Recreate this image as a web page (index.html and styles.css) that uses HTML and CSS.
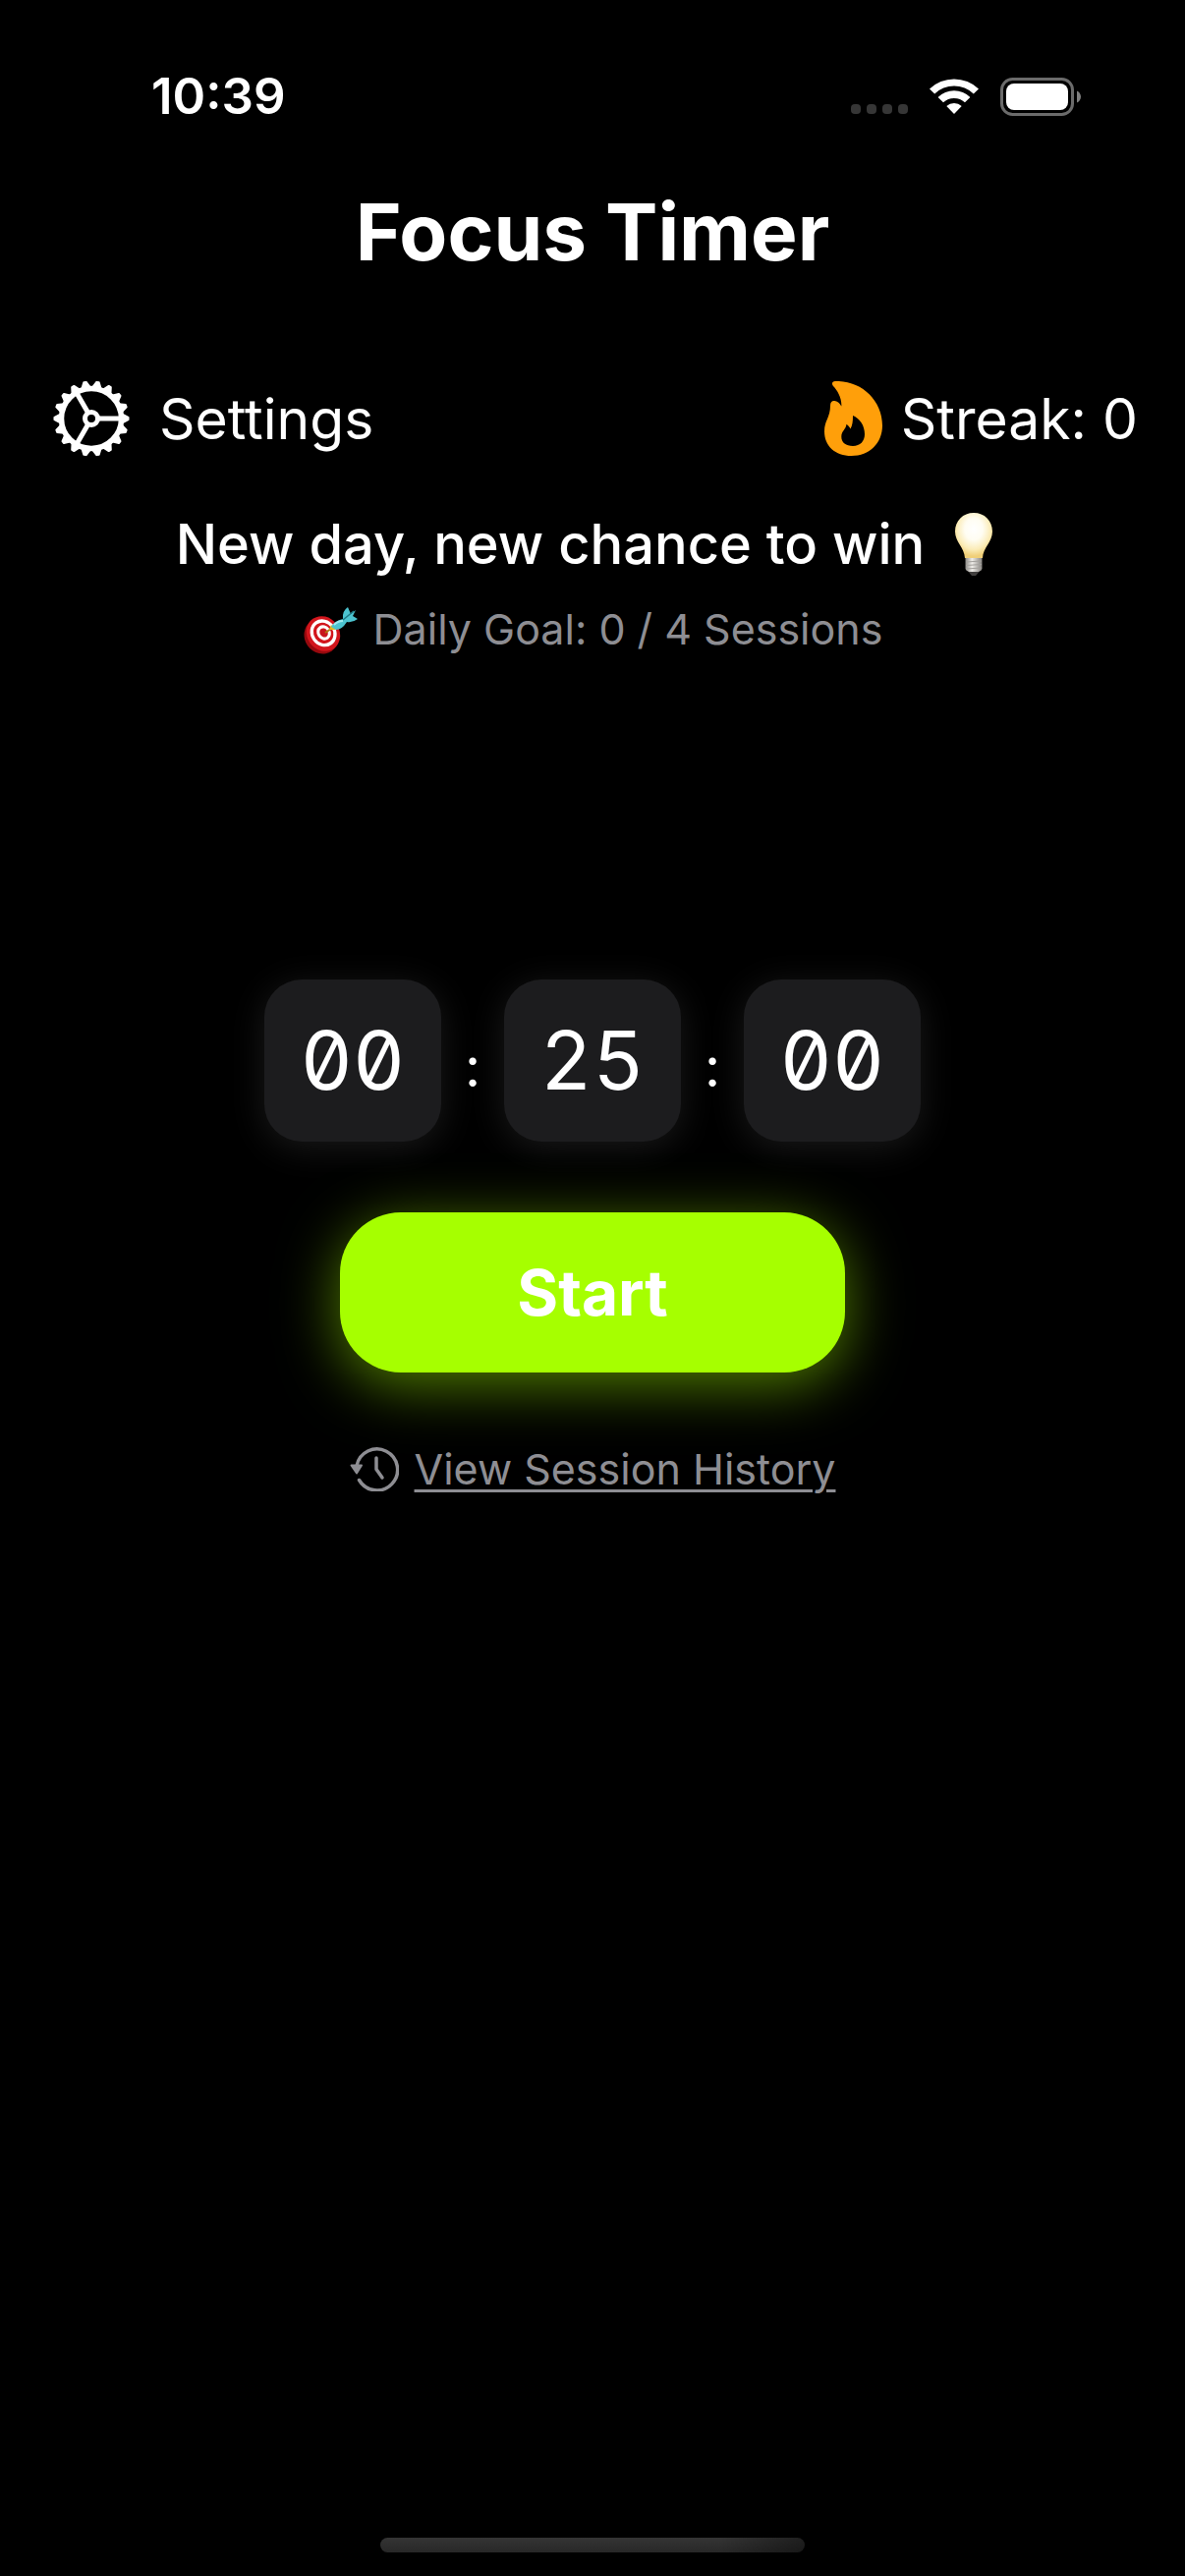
FILE: index.html
```html
<!DOCTYPE html>
<html lang="en">
<head>
<meta charset="utf-8">
<meta name="viewport" content="width=device-width, initial-scale=1">
<title>Focus Timer</title>
<link rel="stylesheet" href="styles.css">
</head>
<body>
<div class="screen">
  <header class="status-bar">
    <time class="clock">10:39</time>
    <div class="indicators">
      <span class="signal"><i></i><i></i><i></i><i></i></span>
      <svg class="wifi" viewBox="0 0 52 38" aria-hidden="true">
        <path d="M1 11.500A36 36 0 0 1 51 11.500L45.800 16.500A28.500 28.500 0 0 0 6.200 16.500Z"/>
        <path d="M9.600 20A23.500 23.500 0 0 1 42.400 20L37 25.300A16 16 0 0 0 15 25.300Z"/>
        <path d="M18.300 29A11.200 11.200 0 0 1 33.700 29L26 37Z"/>
      </svg>
      <svg class="battery" viewBox="0 0 82 39" aria-hidden="true">
        <rect x="1.500" y="1.500" width="72" height="36" rx="11" fill="none" stroke="#6b6b6b" stroke-width="3"/>
        <rect x="6" y="6" width="63" height="27" rx="8" fill="#fff"/>
        <path d="M78 13.500C80.500 14.500 82 17 82 19.500S80.500 24.500 78 25.500Z" fill="#808080"/>
      </svg>
    </div>
  </header>

  <h1 class="title">Focus Timer</h1>

  <nav class="toolbar">
    <button class="settings" type="button">
      <svg class="gear" viewBox="-39 -39 78 78" aria-hidden="true">
        <defs><path id="tooth" d="M31-4.500L37.500-1.200V1.200L31 4.500Z"/></defs>
        <g fill="#fff" stroke="#fff" stroke-width="2" stroke-linejoin="round">
          <use href="#tooth"/><use href="#tooth" transform="rotate(20)"/><use href="#tooth" transform="rotate(40)"/>
          <use href="#tooth" transform="rotate(60)"/><use href="#tooth" transform="rotate(80)"/><use href="#tooth" transform="rotate(100)"/>
          <use href="#tooth" transform="rotate(120)"/><use href="#tooth" transform="rotate(140)"/><use href="#tooth" transform="rotate(160)"/>
          <use href="#tooth" transform="rotate(180)"/><use href="#tooth" transform="rotate(200)"/><use href="#tooth" transform="rotate(220)"/>
          <use href="#tooth" transform="rotate(240)"/><use href="#tooth" transform="rotate(260)"/><use href="#tooth" transform="rotate(280)"/>
          <use href="#tooth" transform="rotate(300)"/><use href="#tooth" transform="rotate(320)"/><use href="#tooth" transform="rotate(340)"/>
        </g>
        <g fill="none" stroke="#fff" stroke-width="5">
          <circle r="30.500" stroke-width="5.500"/>
          <circle r="6.500"/>
          <path d="M8 0H30M-4-6.900L-15-26M-4 6.900L-15 26"/>
        </g>
      </svg>
      <span>Settings</span>
    </button>
    <div class="streak">
      <svg class="flame" viewBox="0 0 60 76" aria-hidden="true">
        <path fill="#ff9f0a" fill-rule="evenodd" d="M11 0C37-1 59 19 59 45C59 63 46 76 27.500 76C11 76 0 66 0 51C0 40 6 37 6 25C6 21 8 19.500 10.500 20C14 20.600 16 23 17.300 25.500C18 17 13 9 9 5C7 2.500 8 0 11 0ZM29 35C29 41 28.500 45 26.500 48.500C25.500 46.500 24 44.800 22.500 43.700C22 49 17.300 50.500 17.300 56.500C17.300 62.500 22 66 29 66C36.500 66 41 61 41 54C41 45 36 38 29 35Z"/>
      </svg>
      <span>Streak: 0</span>
    </div>
  </nav>

  <main class="content">
    <p class="message">
      <span>New day, new chance to win</span>
      <svg class="bulb" viewBox="0 0 40 66" aria-hidden="true">
        <defs>
          <radialGradient id="glass" cx=".5" cy=".36" r=".6">
            <stop offset="0" stop-color="#fff"/><stop offset=".4" stop-color="#fffdf2"/>
            <stop offset=".75" stop-color="#fbecb8"/><stop offset="1" stop-color="#f0cf78"/>
          </radialGradient>
          <linearGradient id="cap">
            <stop offset="0" stop-color="#8c8a86"/><stop offset=".4" stop-color="#efede9"/><stop offset="1" stop-color="#85827e"/>
          </linearGradient>
        </defs>
        <path fill="url(#glass)" d="M20 1C31 1 39 9 39 20C39 31 29.500 36 29 47H11C10.500 36 1 31 1 20C1 9 9 1 20 1Z"/>
        <path fill="url(#cap)" d="M11.500 47H28.500V58Q28 60 25 61H15Q12 60 11.500 58Z"/>
        <path d="M12 51L28 50M12 54.500L28 53.500M12 58L28 57" stroke="#a3a19d"/>
        <path fill="#403e3d" d="M14.500 61H25.500L22 65H18Z"/>
      </svg>
    </p>
    <p class="goal">
      <svg class="target" viewBox="0 0 56 48" aria-hidden="true">
        <ellipse cx="19" cy="29.500" rx="17" ry="18.500" transform="rotate(-35 19 29.500)" fill="#97090e"/>
        <g transform="rotate(-35 21 27)">
          <ellipse cx="21" cy="27" rx="16.500" ry="18.500" fill="#d2151c"/>
          <ellipse cx="21.500" cy="26.500" rx="13" ry="14.500" fill="#fff"/>
          <ellipse cx="21.500" cy="26.500" rx="9.800" ry="11" fill="#d2151c"/>
          <ellipse cx="22" cy="26.500" rx="7" ry="8" fill="#fff"/>
          <ellipse cx="22" cy="26.500" rx="4" ry="4.800" fill="#c8151c"/>
        </g>
        <path d="M23 26L32 20" stroke="#ae7410" stroke-width="2"/>
        <path fill="#e5bb20" d="M27 23L29 18L34 23Z"/>
        <path fill="#4cc3cf" d="M29 20Q32 14 41 12Q40 4 46 0L49 7L54 3L51 9L56 12Q51 16 45 15Q40 23 34 23Z"/>
        <path d="M41 13L52 4" stroke="#1c7884" stroke-width="1.500"/>
        <path d="M32 18Q36 14 41 14" fill="none" stroke="#9ee9ed" stroke-width="2"/>
      </svg>
      <span>Daily Goal: 0 / 4 Sessions</span>
    </p>

    <div class="timer" role="timer">
      <span class="unit">00</span>
      <span class="colon">:</span>
      <span class="unit">25</span>
      <span class="colon">:</span>
      <span class="unit">00</span>
    </div>

    <button class="start" type="button">Start</button>

    <a class="history" href="#history">
      <svg class="history-icon" viewBox="0 0 50 46" aria-hidden="true">
        <path d="M7 20A21 21 0 1 1 9.500 34.500" fill="none" stroke="#8e8e93" stroke-width="3.500" stroke-linecap="round"/>
        <path d="M27 12V23.500L33 32" fill="none" stroke="#8e8e93" stroke-width="3.500" stroke-linecap="round" stroke-linejoin="round"/>
        <path d="M1.500 19.500H12L7 27.500Z" fill="#8e8e93" stroke="#8e8e93" stroke-width="2" stroke-linejoin="round"/>
      </svg>
      <span class="history-label">View Session History</span>
    </a>
  </main>

  <div class="home-indicator"></div>
</div>
</body>
</html>
```
FILE: styles.css
```css
* {
  box-sizing: border-box;
}

body {
  margin: 0;
  background: #000;
  color: #fff;
  font-family: Inter, "Liberation Sans", sans-serif;
}

button {
  padding: 0;
  border: 0;
  background: none;
  color: inherit;
  font: inherit;
}

h1,
p {
  margin: 0;
}

svg {
  display: block;
  flex: none;
}

.screen {
  display: flex;
  flex-direction: column;
  min-height: 100vh;
  padding-bottom: 24px;
}

.status-bar {
  display: flex;
  align-items: center;
  justify-content: space-between;
  height: 196px;
  padding: 0 106px 0 154px;
}

.clock {
  font-size: 51px;
  font-weight: 600;
  line-height: 60px;
}

.indicators {
  display: flex;
  align-items: center;
  gap: 21px;
}

.signal {
  display: flex;
  align-self: flex-end;
  gap: 6px;
  padding-bottom: 2px;
}

.signal i {
  width: 10px;
  height: 10px;
  border-radius: 4px;
  background: #363636;
}

.wifi {
  width: 52px;
  height: 38px;
  fill: #fff;
}

.battery {
  width: 82px;
  height: 39px;
}

.title {
  font-size: 80px;
  font-weight: 700;
  line-height: 80px;
  text-align: center;
}

.toolbar {
  display: flex;
  align-items: center;
  justify-content: space-between;
  height: 80px;
  margin-top: 110px;
  padding: 0 48px 0 54px;
  font-size: 57px;
}

.settings {
  display: flex;
  align-items: center;
  gap: 30px;
}

.gear {
  width: 78px;
  height: 78px;
}

.streak {
  display: flex;
  align-items: center;
  gap: 18px;
}

.flame {
  width: 60px;
  height: 76px;
}

.content {
  display: flex;
  flex: 1;
  flex-direction: column;
  align-items: center;
}

.message {
  display: flex;
  align-items: center;
  gap: 30px;
  margin-top: 48px;
  padding-right: 16px;
  font-size: 56px;
  font-weight: 500;
  line-height: 80px;
}

.bulb {
  width: 40px;
  height: 66px;
}

.goal {
  display: flex;
  align-items: center;
  gap: 16px;
  margin-top: 20px;
  color: #8e8e93;
  font-size: 43px;
  line-height: 52px;
}

.target {
  align-self: flex-end;
  width: 56px;
  height: 48px;
}

.timer {
  display: flex;
  align-items: center;
  margin-top: 331px;
}

.unit {
  width: 180px;
  border-radius: 38px;
  background: #1c1c1e;
  box-shadow: 0 6px 36px rgba(255, 255, 255, 0.1);
  font-size: 82px;
  font-feature-settings: "tnum", "zero";
  line-height: 165px;
  text-align: center;
}

.colon {
  width: 64px;
  padding-top: 12px;
  font-size: 56px;
  text-align: center;
}

.start {
  width: 514px;
  height: 163px;
  margin-top: 72px;
  border-radius: 62px;
  background: #a6ff00;
  box-shadow: 0 12px 60px rgba(166, 255, 0, 0.5);
  font-size: 64px;
  font-weight: 700;
}

.history {
  display: flex;
  align-items: center;
  gap: 16px;
  margin-top: 70px;
  color: #8e8e93;
  font-size: 43px;
  line-height: 56px;
  text-decoration: none;
}

.history-icon {
  width: 50px;
  height: 46px;
}

.history-label {
  text-decoration: underline;
  text-decoration-thickness: 3px;
  text-underline-offset: 5px;
}

.home-indicator {
  align-self: center;
  width: 432px;
  height: 15px;
  border-radius: 8px;
  background: linear-gradient(90deg, transparent 80%, rgba(0, 0, 0, 0.4)), linear-gradient(#343434, #282828);
}
```
